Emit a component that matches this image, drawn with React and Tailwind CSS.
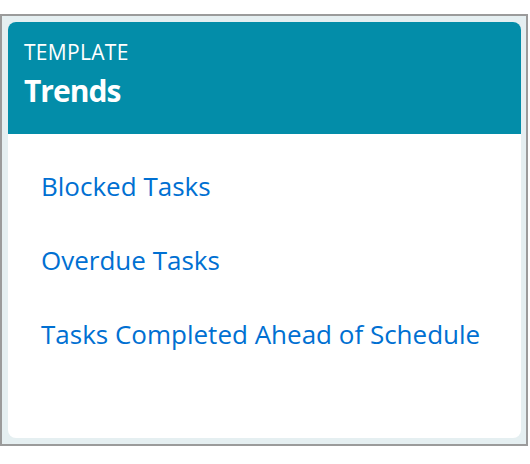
export default function App() {
  const links = ["Blocked Tasks", "Overdue Tasks", "Tasks Completed Ahead of Schedule"];
  return (
    <div className="w-[530px] h-[464px] bg-white pt-[14px]" style={{ fontFamily: '"Open Sans", "Noto Sans", sans-serif' }}>
      <div className="w-[528px] h-[432px] border-2 border-[#9b9b9b] bg-[#e5eff1] pt-[6px] pl-[6px] pr-[5px] pb-[6px]">
        <div className="h-full bg-white rounded-lg overflow-hidden flex flex-col">
          <div className="h-[112px] bg-[#038da9] px-4 pt-[18px] text-white">
            <div className="text-[21px] leading-[24px] tracking-[0.3px]">TEMPLATE</div>
            <div className="text-[30px] leading-[36px] font-bold tracking-[-1px] mt-[9px]">Trends</div>
          </div>
          <div className="pl-[33px] pt-[15px] flex flex-col">
            {links.map((l) => (
              <a key={l} className="text-[26px] leading-[74px] text-[#0070d2]">{l}</a>
            ))}
          </div>
        </div>
      </div>
    </div>
  );
}
